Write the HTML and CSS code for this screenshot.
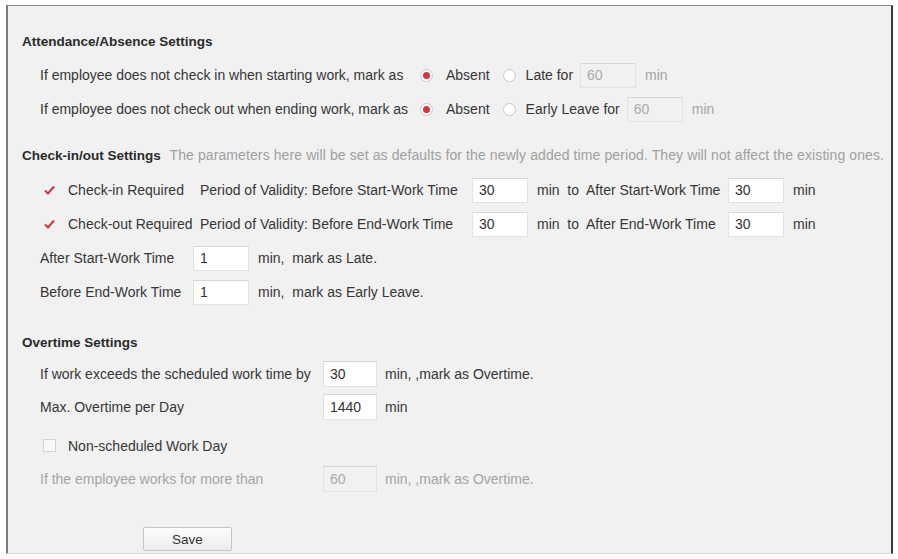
FILE: index.html
```html
<!DOCTYPE html>
<html lang="en">
<head>
  <meta charset="UTF-8" />
  <meta name="viewport" content="width=device-width, initial-scale=1.0" />
  <title>Attendance Rule Settings</title>
  <link rel="stylesheet" href="styles.css">
</head>
<body>
  <div class="panel">

    <h2 class="group-title first">Attendance/Absence Settings</h2>

    <div class="row">
      <span class="rule-text">If employee does not check in when starting work, mark as</span>
      <label class="choice"><span class="radio on"></span>Absent</label>
      <label class="choice second"><span class="radio"></span>Late for</label>
      <input class="field" type="text" value="60" disabled />
      <span class="unit muted">min</span>
    </div>

    <div class="row">
      <span class="rule-text">If employee does not check out when ending work, mark as</span>
      <label class="choice"><span class="radio on"></span>Absent</label>
      <label class="choice second"><span class="radio"></span>Early Leave for</label>
      <input class="field" type="text" value="60" disabled />
      <span class="unit muted">min</span>
    </div>

    <h2 class="group-title mid">Check-in/out Settings <span class="hint">The parameters here will be set as defaults for the newly added time period. They will not affect the existing ones.</span></h2>

    <div class="row period-row">
      <span class="check on">
        <svg width="11" height="10" viewBox="0 0 11 10"><path d="M1 5.5 L4 8.5 L10 1.5" fill="none" stroke="#d0343a" stroke-width="2"/></svg>
      </span>
      <span class="check-label">Check-in Required</span>
      <span class="period-text">Period of Validity: Before Start-Work Time</span>
      <input class="field" type="text" value="30" />
      <span class="unit">min&nbsp; to</span>
      <span class="after-text">After Start-Work Time</span>
      <input class="field" type="text" value="30" />
      <span class="unit">min</span>
    </div>

    <div class="row period-row">
      <span class="check on">
        <svg width="11" height="10" viewBox="0 0 11 10"><path d="M1 5.5 L4 8.5 L10 1.5" fill="none" stroke="#d0343a" stroke-width="2"/></svg>
      </span>
      <span class="check-label">Check-out Required</span>
      <span class="period-text">Period of Validity: Before End-Work Time</span>
      <input class="field" type="text" value="30" />
      <span class="unit">min&nbsp; to</span>
      <span class="after-text">After End-Work Time</span>
      <input class="field" type="text" value="30" />
      <span class="unit">min</span>
    </div>

    <div class="row">
      <span class="late-text">After Start-Work Time</span>
      <input class="field" type="text" value="1" />
      <span class="unit">min,&nbsp; mark as Late.</span>
    </div>

    <div class="row">
      <span class="late-text">Before End-Work Time</span>
      <input class="field" type="text" value="1" />
      <span class="unit">min,&nbsp; mark as Early Leave.</span>
    </div>

    <h2 class="group-title last">Overtime Settings</h2>

    <div class="row short">
      <span class="over-text">If work exceeds the scheduled work time by</span>
      <input class="field" type="text" value="30" />
      <span class="unit wide">min, ,mark as Overtime.</span>
    </div>

    <div class="row short">
      <span class="over-text">Max. Overtime per Day</span>
      <input class="field" type="text" value="1440" />
      <span class="unit wide">min</span>
    </div>

    <div class="row short spaced">
      <span class="check"></span>
      <span class="check-label">Non-scheduled Work Day</span>
    </div>

    <div class="row short muted">
      <span class="over-text">If the employee works for more than</span>
      <input class="field" type="text" value="60" disabled />
      <span class="unit wide">min, ,mark as Overtime.</span>
    </div>

    <button class="save">Save</button>
  </div>
</body>
</html>
```

FILE: styles.css
```css
body, html {
  margin: 0;
  padding: 0;
  background: #fff;
  overflow: hidden;
  font-family: 'Liberation Sans', Arial, sans-serif;
  font-size: 14px;
  color: #363636;
}

.panel {
  margin: 5px 5px 0 6px;
  height: 549px;
  padding: 21px 0 0 14px;
  background: #f1f1f1;
  border-top: 1px solid #8c8c8c;
  border-left: 2px solid #7c7c7c;
  border-right: 2px solid #3a3a3a;
  border-bottom: 1px solid #dcdcdc;
  box-sizing: border-box;
}

.group-title {
  margin: 0;
  height: 30px;
  line-height: 30px;
  font-size: 13.5px;
  font-weight: 700;
  color: #2a2a2a;
  white-space: nowrap;
}
.group-title.first { margin-bottom: 1px; }
.group-title.mid { margin-top: 14px; margin-bottom: 3px; }
.group-title.last { margin-top: 20px; height: 28px; line-height: 28px; }

.hint {
  font-weight: 400;
  font-size: 14px;
  letter-spacing: 0.1px;
  color: #a0a0a0;
  margin-left: 5px;
}

.row {
  display: flex;
  align-items: center;
  height: 34px;
  padding-left: 18px;
  white-space: nowrap;
}
.row.short { height: 33px; }
.row.spaced { margin-top: 6px; }

.rule-text { width: 380px; }

.choice {
  display: flex;
  align-items: center;
}
.choice.second { margin-left: 13px; }

.radio {
  width: 11px;
  height: 11px;
  border: 1px solid #c8c8c8;
  border-radius: 50%;
  background: #fff;
  margin-right: 13px;
  display: flex;
  align-items: center;
  justify-content: center;
}
.radio.on::after {
  content: "";
  width: 7px;
  height: 7px;
  border-radius: 50%;
  background: #d8343c;
}
.choice.second .radio { margin-right: 10px; }

.field {
  width: 56px;
  height: 25px;
  box-sizing: border-box;
  margin: 0 0 0 7px;
  padding: 0 6px;
  border: 1px solid #e2e2e2;
  border-top-color: #d6d6d6;
  background: #fff;
  font-family: inherit;
  font-size: 14px;
  color: #333;
  outline: none;
}
.field:disabled {
  background: #f1f1f1;
  color: #aaa;
}

.unit { margin-left: 9px; }
.unit.wide { margin-left: 8px; }

.muted, .muted .unit { color: #a4a4a4; }

.check {
  width: 11px;
  height: 11px;
  margin-left: 3px;
  border: 1px solid #d4d4d4;
  background: #f8f8f8;
  display: flex;
  align-items: center;
  justify-content: center;
}
.check.on {
  border-color: transparent;
  background: transparent;
}

.check-label {
  margin-left: 12px;
}

.period-row .check-label { width: 132px; }
.period-text { width: 266px; }
.period-row .field { margin-left: 6px; }
.after-text { width: 136px; margin-left: 7px; }

.late-text { width: 153px; }
.late-text + .field { margin-left: 0; }

.over-text { width: 283px; }
.over-text + .field { margin-left: 0; height: 26px; width: 54px; }

.save {
  display: block;
  margin: 32px 0 0 121px;
  width: 89px;
  height: 24px;
  border: 1px solid #c4c4c4;
  border-radius: 2px;
  background: linear-gradient(#fdfdfd, #ececec);
  font-family: inherit;
  font-size: 13.5px;
  color: #333;
}
```
